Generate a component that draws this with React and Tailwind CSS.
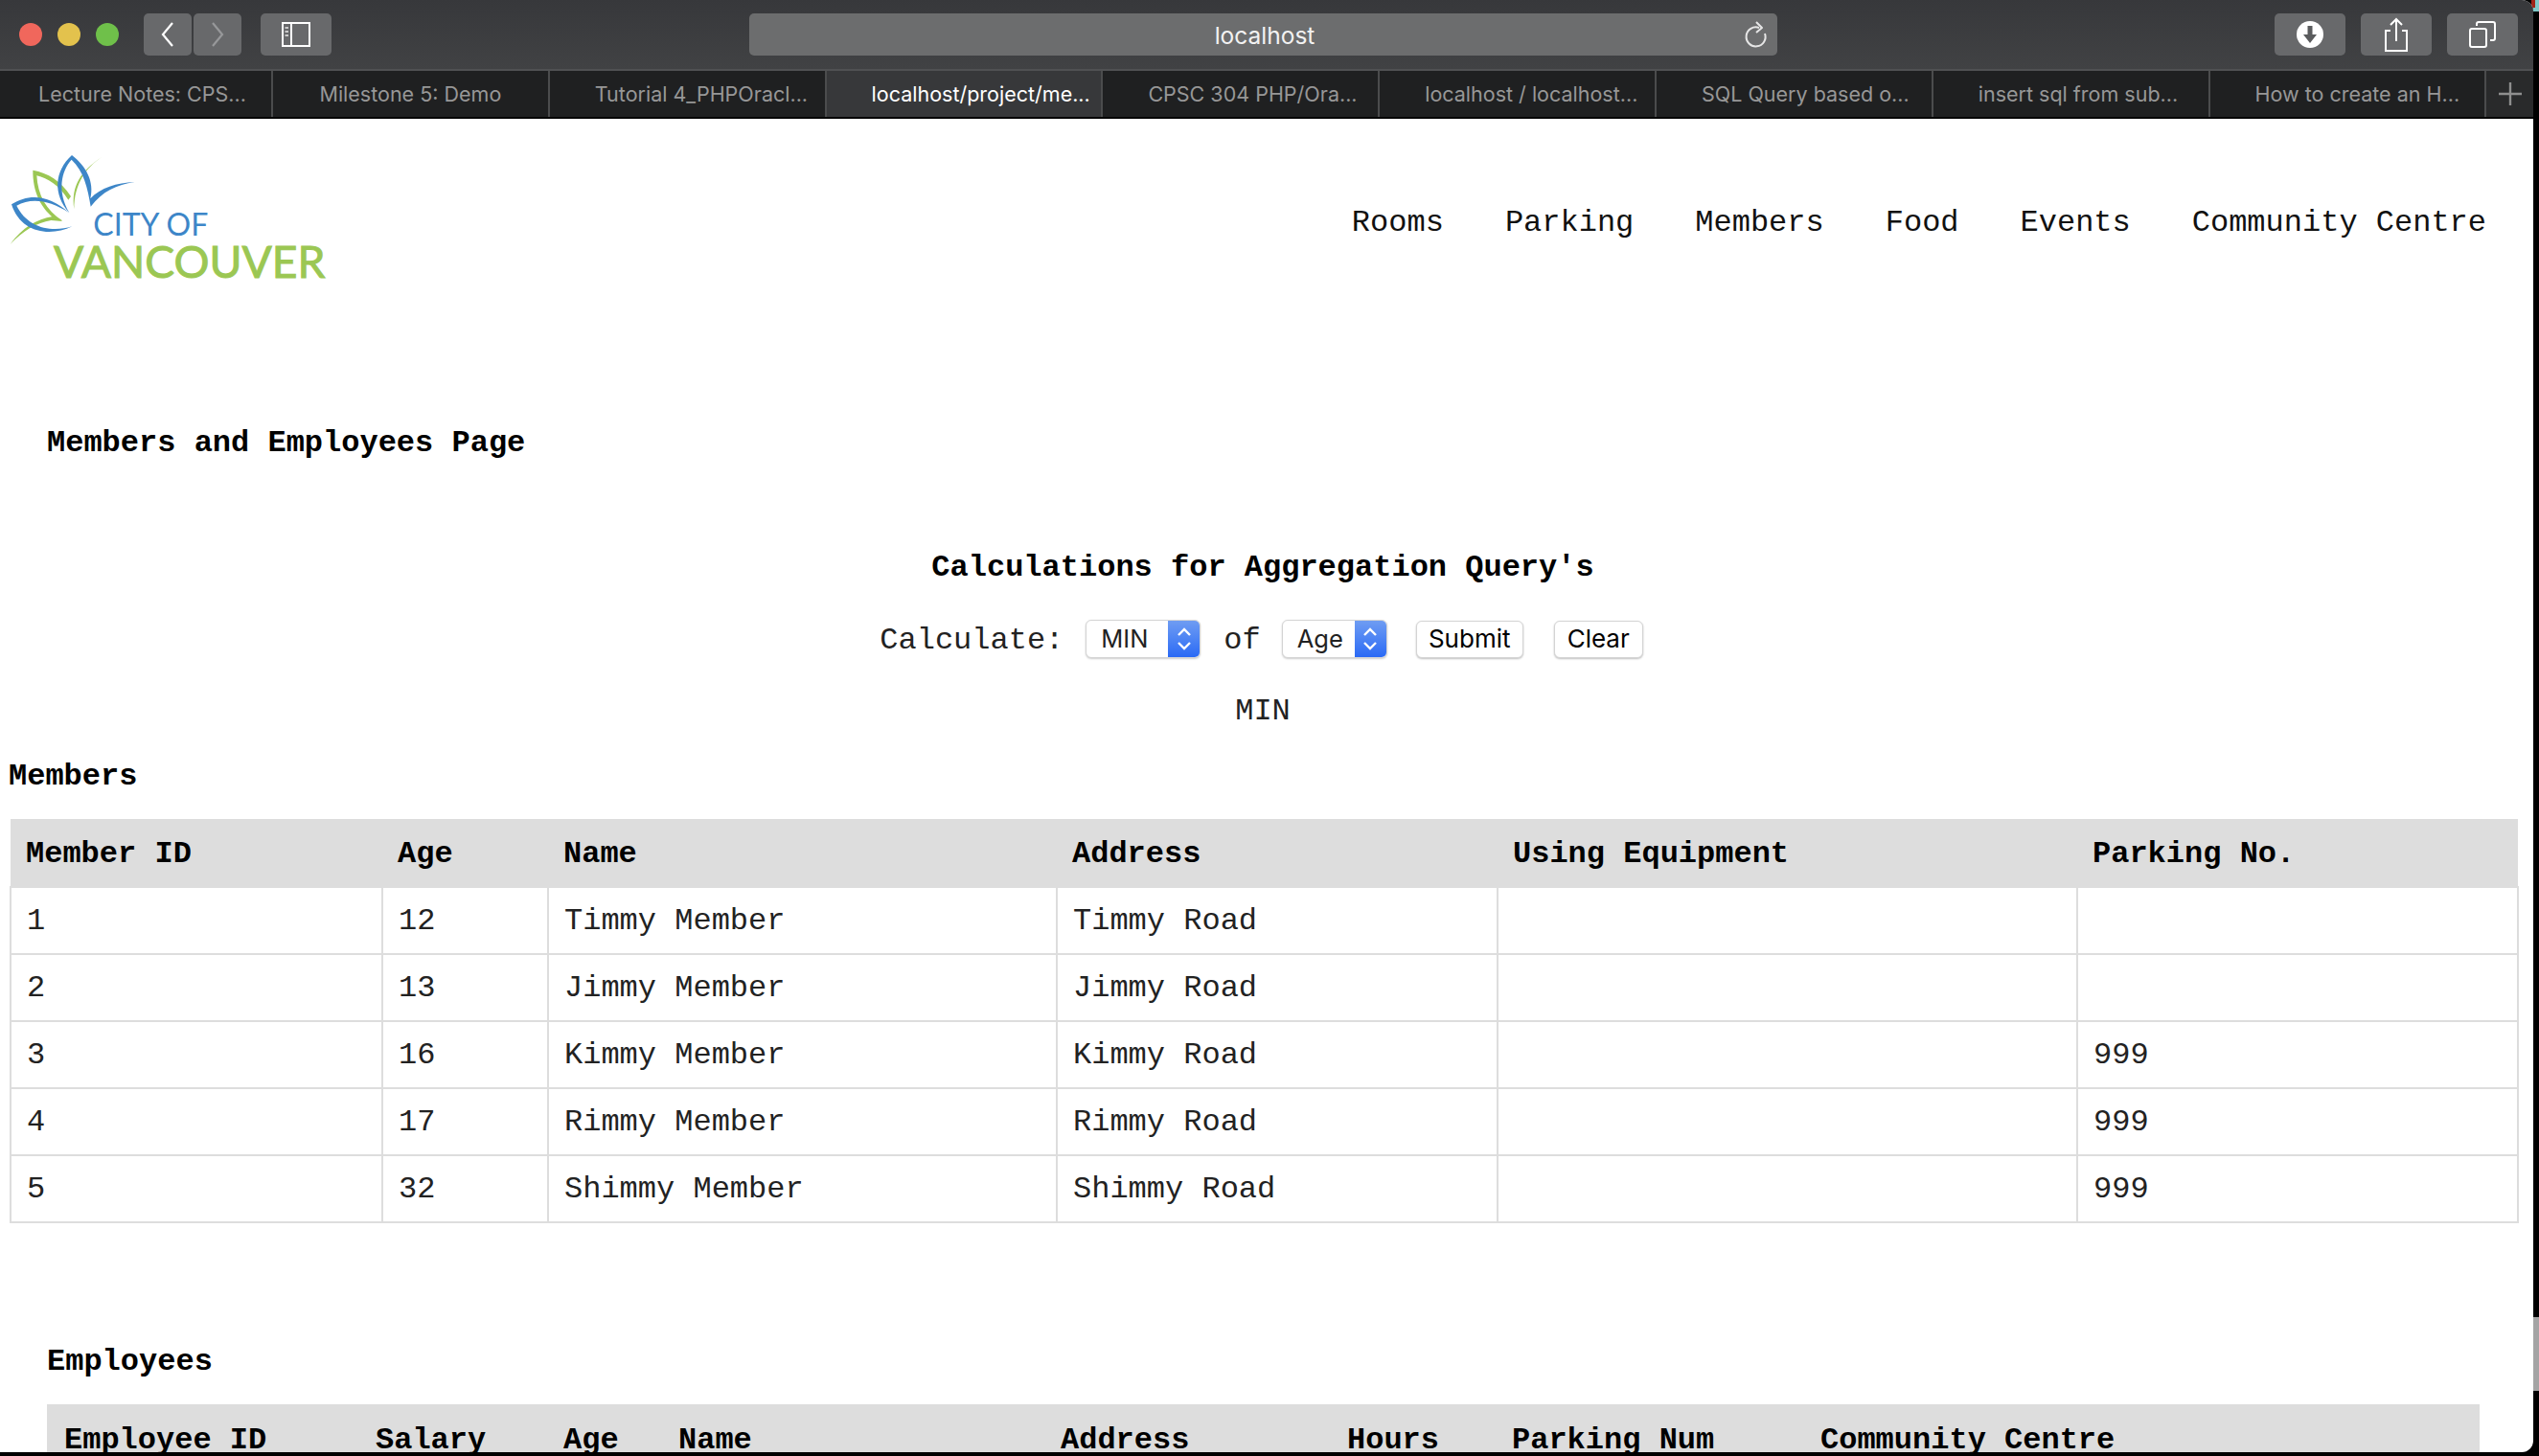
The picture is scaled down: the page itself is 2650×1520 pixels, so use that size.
import React from 'react';

const MONO = "font-['Liberation_Mono','Courier_New',monospace]";
const UI = "font-['Inter','Liberation_Sans',sans-serif]";

const tabs = [
  'Lecture Notes: CPS...',
  'Milestone 5: Demo',
  'Tutorial 4_PHPOracl...',
  'localhost/project/me...',
  'CPSC 304 PHP/Ora...',
  'localhost / localhost...',
  'SQL Query based o...',
  'insert sql from sub...',
  'How to create an H...',
];

const navLinks = ['Rooms', 'Parking', 'Members', 'Food', 'Events', 'Community Centre'];

const members = [
  ['1', '12', 'Timmy Member', 'Timmy Road', '', ''],
  ['2', '13', 'Jimmy Member', 'Jimmy Road', '', ''],
  ['3', '16', 'Kimmy Member', 'Kimmy Road', '', '999'],
  ['4', '17', 'Rimmy Member', 'Rimmy Road', '', '999'],
  ['5', '32', 'Shimmy Member', 'Shimmy Road', '', '999'],
];

const ToolButton = ({ className, children }) => (
  <div className={`h-11 flex items-center justify-center rounded-[5px] bg-[#68696b] ${className}`}>{children}</div>
);

const Logo = () => (
  <svg width="360" height="150" viewBox="0 0 1080 450" className="block">
    {/* green leaves */}
    <path d="M318 42 C270 75 232 125 232 205 C222 130 255 85 318 42 Z" fill="#9bc753" />
    <path d="M103 83 C150 92 190 115 222 165 L214 176 C185 130 150 108 115 100 C118 160 145 210 195 241 L178 240 C128 205 102 150 103 83 Z" fill="#9bc753" />
    <path d="M32 315 C70 262 115 236 165 228 L196 243 L160 240 C115 248 72 272 32 315 Z" fill="#9bc753" />
    {/* blue leaves */}
    <path d="M225 36 C270 70 296 120 283 172 C315 138 365 122 422 120 C365 128 320 150 284 197 C275 140 262 85 224 50 C192 85 178 150 217 216 C165 160 170 85 225 36 Z" fill="#3d86c8" />
    <path d="M36 190 C90 155 155 160 216 216 C155 178 100 168 52 194 C85 262 160 280 226 259 C160 292 65 282 36 190 Z" fill="#3d86c8" />
    <text x="292" y="288" textLength="360" lengthAdjust="spacingAndGlyphs" fill="#3d86c8" fontSize="100" fontFamily="Lato, sans-serif">CITY OF</text>
    <text x="168" y="420" textLength="850" lengthAdjust="spacingAndGlyphs" fill="#9bc753" stroke="#9bc753" strokeWidth="3" fontSize="140" fontFamily="Lato, sans-serif">VANCOUVER</text>
  </svg>
);

const SelectBox = ({ label, className }) => (
  <div className={`h-10 flex items-center justify-between bg-white rounded-[6px] border border-[#d4d4d4] shadow-[0_1px_2px_rgba(0,0,0,0.2)] overflow-hidden ${className}`}>
    <span className={`pl-[15px] text-[25.5px] text-[#222] ${UI}`}>{label}</span>
    <span className="w-[33px] h-full flex items-center justify-center bg-gradient-to-b from-[#6f9cf2] to-[#2a69f5]">
      <svg width="18" height="30" viewBox="0 0 18 30" fill="none" stroke="#fff" strokeWidth="2.4">
        <path d="M3 11 L9 5 L15 11" />
        <path d="M3 19 L9 25 L15 19" />
      </svg>
    </span>
  </div>
);

const FormButton = ({ children, className }) => (
  <button className={`h-[39px] bg-white rounded-[6px] border border-[#d4d4d4] shadow-[0_1px_2px_rgba(0,0,0,0.25)] text-[26px] text-black flex items-center justify-center ${UI} ${className}`}>
    {children}
  </button>
);

export default function App() {
  return (
    <div className="relative w-[2650px] h-[1520px] bg-black overflow-hidden">
      {/* desktop showing past the window edge */}
      <div className="absolute right-0 top-0 w-[6px] h-3 bg-[#7fc8c8]" />
      <div className="absolute right-[4px] top-0 w-[4px] h-2 bg-[#a02418]" />
      <div className="absolute right-0 top-[1375px] w-[6px] h-[77px] bg-[#a4a4a4]" />

      <div className="relative w-[2644px] h-[1516px] flex flex-col rounded-tr-[12px] rounded-br-[12px] overflow-hidden bg-white">
        {/* Toolbar */}
        <div className="h-[72px] shrink-0 flex items-start pt-[14px] bg-gradient-to-b from-[#37383b] to-[#414244]">
          <div className="flex items-center h-11 pl-5 gap-4">
            <span className="w-6 h-6 rounded-full bg-[#f0675c]" />
            <span className="w-6 h-6 rounded-full bg-[#e3c24d]" />
            <span className="w-6 h-6 rounded-full bg-[#6fc04a]" />
          </div>
          <ToolButton className="w-[50px] ml-[26px]">
            <svg width="16" height="26" viewBox="0 0 16 26" fill="none" stroke="#fff" strokeWidth="2.2"><path d="M13 1 L3 13 L13 25" /></svg>
          </ToolButton>
          <ToolButton className="w-[50px] ml-[2px]">
            <svg width="16" height="26" viewBox="0 0 16 26" fill="none" stroke="#97989a" strokeWidth="2.2"><path d="M3 1 L13 13 L3 25" /></svg>
          </ToolButton>
          <ToolButton className="w-[74px] ml-5">
            <svg width="30" height="26" viewBox="0 0 30 26" fill="none" stroke="#fff" strokeWidth="2">
              <rect x="1" y="1" width="28" height="24" />
              <path d="M10 1 V25" />
              <path d="M3.5 6 H7 M3.5 10 H7 M3.5 14 H7" strokeWidth="2" stroke="#c9c9c9" />
            </svg>
          </ToolButton>
          <div className={`relative ml-[436px] w-[1073px] h-11 flex items-center justify-center pl-[3px] pt-[3px] rounded-[5px] bg-[#6c6d6e] text-[24.5px] text-[#f2f2f2] ${UI}`}>
            localhost
            <svg className="absolute right-[10px] top-[7px]" width="24" height="30" viewBox="0 0 24 30" fill="none" stroke="#e6e6e6" strokeWidth="2">
              <path d="M15 8 A10 10 0 1 0 21 14" />
              <path d="M12 2 L18 8 L12 13" strokeLinejoin="round" />
            </svg>
          </div>
          <ToolButton className="w-[74px] ml-[519px]">
            <svg width="28" height="32" viewBox="0 0 28 32">
              <circle cx="14" cy="16" r="14" fill="#fff" />
              <path d="M11.5 7 H16.5 V16 H21 L14 25 L7 16 H11.5 Z" fill="#5a5b5d" />
            </svg>
          </ToolButton>
          <ToolButton className="w-[74px] ml-4">
            <svg width="26" height="36" viewBox="0 0 26 36" fill="none" stroke="#fff" strokeWidth="2">
              <path d="M7 14 H2 V35 H24 V14 H19" />
              <path d="M13 25 V2 M7 8 L13 2 L19 8" />
            </svg>
          </ToolButton>
          <ToolButton className="w-[74px] ml-4">
            <svg width="28" height="28" viewBox="0 0 28 28" fill="none" stroke="#fff" strokeWidth="2">
              <rect x="1" y="8" width="17" height="19" rx="2" />
              <path d="M8 5 V3 A2 2 0 0 1 10 1 H25 A2 2 0 0 1 27 3 V18 A2 2 0 0 1 25 20 H22" />
            </svg>
          </ToolButton>
        </div>

        {/* Tab strip */}
        <div className="h-[52px] shrink-0 flex border-t-2 border-b-2 border-t-[#505153] border-b-black bg-[#1f2021]">
          {tabs.map((tab, i) => (
            <div
              key={tab}
              className={`shrink-0 flex items-center border-r-2 border-[#4b4c4d] whitespace-nowrap text-[21.5px] ${UI} ${i === 0 ? 'w-[285px] pl-[40px]' : 'w-[288.8px] pl-[47px]'} ${i === 1 ? 'justify-center !pl-0' : ''} ${i === 3 ? 'bg-[#37383a] text-white' : 'text-[#979797]'}`}
            >
              {tab}
            </div>
          ))}
          <div className="flex-1 flex items-center justify-center bg-[#292a2b]">
            <svg width="24" height="24" viewBox="0 0 24 24" stroke="#8e8e8e" strokeWidth="2.4"><path d="M12 0 V24 M0 12 H24" /></svg>
          </div>
        </div>

        {/* Page */}
        <div className={`flex-1 min-h-0 overflow-hidden text-[32px] leading-9 text-black ${MONO}`}>
          <header className="flex items-start justify-between h-[200px]">
            <div className="mt-[26px]">
              <Logo />
            </div>
            <nav className="flex gap-[64px] mt-[91px] pr-[49px]">
              {navLinks.map((link) => (
                <a key={link} className="whitespace-pre text-[#111]">{link}</a>
              ))}
            </nav>
          </header>

          <h2 className="mt-[121px] pl-[49px] font-bold">Members and Employees Page</h2>

          <div className="mt-[94px] flex flex-col items-center w-[2636px]">
            <h3 className="font-bold">Calculations for Aggregation Query's</h3>
            <div className="mt-[36px] mr-[3px] h-10 flex items-center">
              <span className="mt-1 text-[#222]">Calculate:</span>
              <SelectBox label="MIN" className="w-[120px] ml-[23px]" />
              <span className="mt-1 ml-[24px] text-[#222]">of</span>
              <SelectBox label="Age" className="w-[110px] ml-[22px]" />
              <FormButton className="w-[112px] ml-[30px]">Submit</FormButton>
              <FormButton className="w-[93px] ml-[32px]">Clear</FormButton>
            </div>
            <p className="mt-[38px] text-[#222]">MIN</p>
          </div>

          <h3 className="mt-[32px] pl-[9px] font-bold">Members</h3>

          <table className="mt-[26px] ml-[10px] w-[2617px] table-fixed border-collapse">
            <colgroup>
              <col className="w-[388px]" />
              <col className="w-[173px]" />
              <col className="w-[531px]" />
              <col className="w-[460px]" />
              <col className="w-[605px]" />
              <col className="w-[460px]" />
            </colgroup>
            <thead>
              <tr className="h-[71px] bg-[#dddddd]">
                {['Member ID', 'Age', 'Name', 'Address', 'Using Equipment', 'Parking No.'].map((h) => (
                  <th key={h} className="px-4 pt-1 text-left font-bold">{h}</th>
                ))}
              </tr>
            </thead>
            <tbody>
              {members.map((row) => (
                <tr key={row[0]} className="h-[70px]">
                  {row.map((cell, i) => (
                    <td key={i} className="px-4 pt-[2px] border-2 border-[#dddddd] text-[#222]">{cell}</td>
                  ))}
                </tr>
              ))}
            </tbody>
          </table>

          <h3 className="mt-[127px] pl-[49px] font-bold">Employees</h3>

          <table className="mt-[26px] ml-[49px] w-[2539px] table-fixed border-collapse">
            <colgroup>
              <col className="w-[325px]" />
              <col className="w-[196px]" />
              <col className="w-[120px]" />
              <col className="w-[399px]" />
              <col className="w-[299px]" />
              <col className="w-[172px]" />
              <col className="w-[322px]" />
              <col className="w-[706px]" />
            </colgroup>
            <thead>
              <tr className="h-[71px] bg-[#dddddd]">
                {['Employee ID', 'Salary', 'Age', 'Name', 'Address', 'Hours', 'Parking Num', 'Community Centre'].map((h) => (
                  <th key={h} className="pl-[18px] pt-1 text-left font-bold">{h}</th>
                ))}
              </tr>
            </thead>
          </table>
        </div>
      </div>
    </div>
  );
}
